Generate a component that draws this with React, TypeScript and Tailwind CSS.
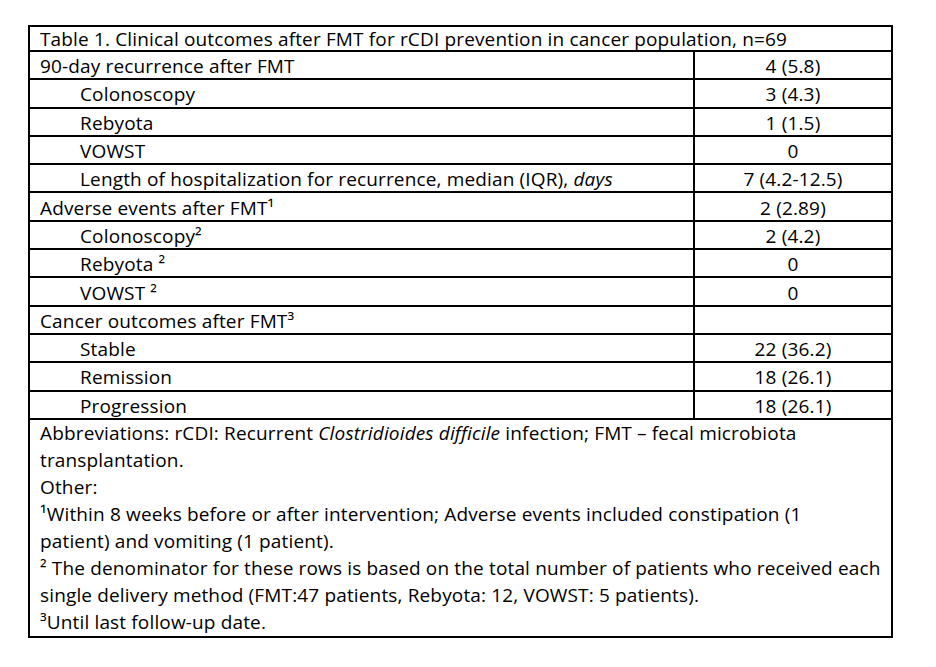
export default function App() {
  const rows: { label: React.ReactNode; value: string; indent?: boolean }[] = [
    { label: '90-day recurrence after FMT', value: '4 (5.8)' },
    { label: 'Colonoscopy', value: '3 (4.3)', indent: true },
    { label: 'Rebyota', value: '1 (1.5)', indent: true },
    { label: 'VOWST', value: '0', indent: true },
    {
      label: (
        <>
          Length of hospitalization for recurrence, median (IQR), <i>days</i>
        </>
      ),
      value: '7 (4.2-12.5)',
      indent: true,
    },
    { label: 'Adverse events after FMT¹', value: '2 (2.89)' },
    { label: 'Colonoscopy²', value: '2 (4.2)', indent: true },
    { label: 'Rebyota ²', value: '0', indent: true },
    { label: 'VOWST ²', value: '0', indent: true },
    { label: 'Cancer outcomes after FMT³', value: '' },
    { label: 'Stable', value: '22 (36.2)', indent: true },
    { label: 'Remission', value: '18 (26.1)', indent: true },
    { label: 'Progression', value: '18 (26.1)', indent: true },
  ]

  return (
    <div className="min-h-screen bg-white pt-[25px] pl-[28px] text-black font-['Open_Sans',sans-serif] text-[19px] tracking-[0.15px]">
      <table className="w-[865px] border-collapse border-2 border-black">
        <tbody>
          <tr className="h-[25px]">
            <td colSpan={2} className="border-2 border-black pl-[10px] pt-[2px] leading-none">
              Table 1. Clinical outcomes after FMT for rCDI prevention in cancer population, n=69
            </td>
          </tr>
          {rows.map((r, i) => (
            <tr key={i} className="h-[28.3px]">
              <td className={`border-2 border-black pt-[3px] leading-none w-[665px] ${r.indent ? 'pl-[50px]' : 'pl-[10px]'}`}>
                {r.label}
              </td>
              <td className="border-2 border-black pt-[3px] text-center leading-none">{r.value}</td>
            </tr>
          ))}
          <tr>
            <td colSpan={2} className="border-2 border-black pl-[10px] pt-0 pb-0 leading-[27px]">
              <div>
                Abbreviations: rCDI: Recurrent <i>Clostridioides difficile</i> infection; FMT – fecal microbiota
              </div>
              <div>transplantation.</div>
              <div>Other:</div>
              <div>¹Within 8 weeks before or after intervention; Adverse events included constipation (1</div>
              <div>patient) and vomiting (1 patient).</div>
              <div>² The denominator for these rows is based on the total number of patients who received each</div>
              <div>single delivery method (FMT:47 patients, Rebyota: 12, VOWST: 5 patients).</div>
              <div>³Until last follow-up date.</div>
            </td>
          </tr>
        </tbody>
      </table>
    </div>
  )
}
